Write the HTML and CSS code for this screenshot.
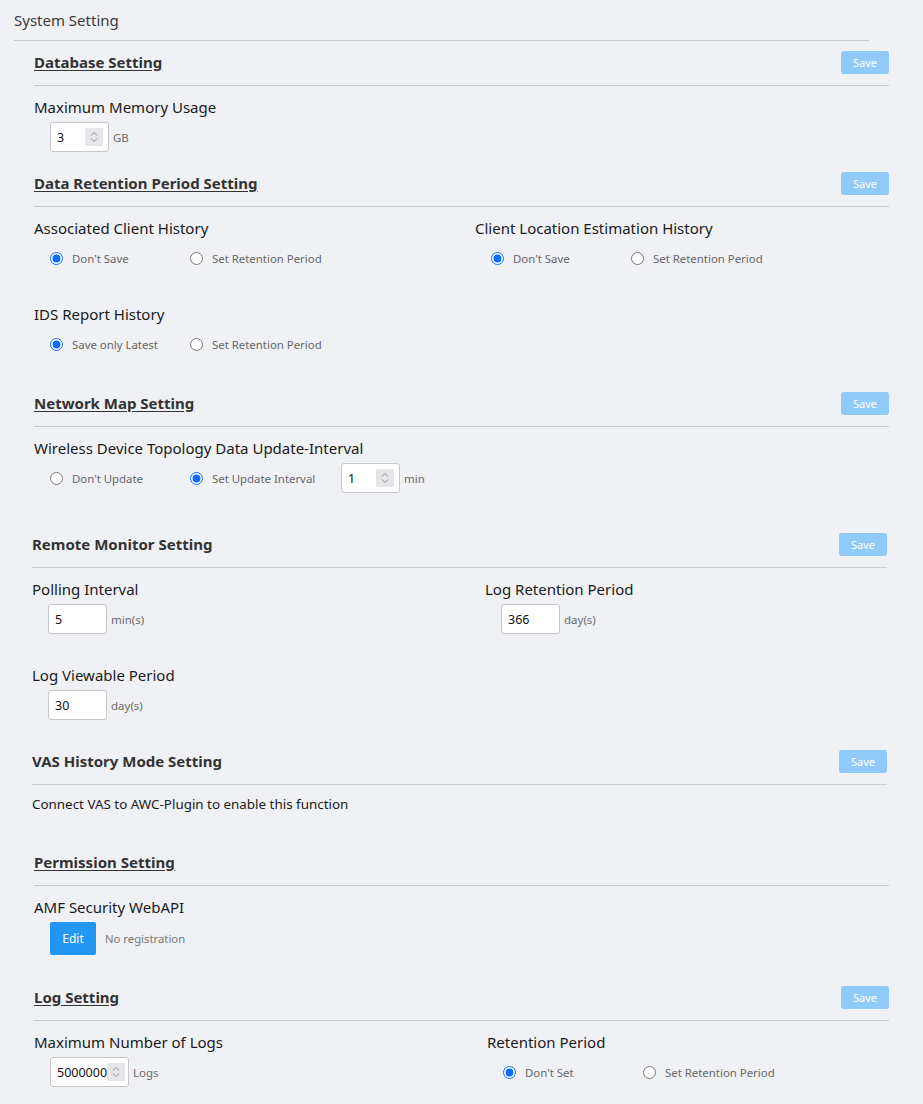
FILE: index.html
```html
<!DOCTYPE html>
<html lang="en">
<head>
<meta charset="utf-8">
<title>System Setting</title>
<link rel="stylesheet" href="styles.css">
</head>
<body>
<div class="page">
  <div class="page-title">System Setting</div>

  <!-- Database -->
  <section class="section pb10">
    <div class="sec-head">
      <h2 class="sec-title u">Database Setting</h2>
      <button class="btn-save">Save</button>
    </div>
    <div class="field">
      <div class="label">Maximum Memory Usage</div>
      <div class="row">
        <span class="num w59"><span class="val">3</span><span class="spin"><svg viewBox="0 0 18 18" width="18" height="18"><path d="M6 7.5 9 4.5 12 7.5M6 10.5 9 13.5 12 10.5" fill="none" stroke="#8a8a8a" stroke-width="1"/></svg></span></span>
        <span class="unit">GB</span>
      </div>
    </div>
  </section>

  <!-- Data Retention -->
  <section class="section pb23">
    <div class="sec-head">
      <h2 class="sec-title u">Data Retention Period Setting</h2>
      <button class="btn-save">Save</button>
    </div>
    <div class="grid g441">
      <div class="field">
        <div class="label">Associated Client History</div>
        <div class="row">
          <label class="opt"><input type="radio" name="ach" checked><span>Don't Save</span></label>
          <label class="opt"><input type="radio" name="ach"><span>Set Retention Period</span></label>
        </div>
      </div>
      <div class="field">
        <div class="label">Client Location Estimation History</div>
        <div class="row">
          <label class="opt"><input type="radio" name="cle" checked><span>Don't Save</span></label>
          <label class="opt"><input type="radio" name="cle"><span>Set Retention Period</span></label>
        </div>
      </div>
      <div class="field">
        <div class="label">IDS Report History</div>
        <div class="row">
          <label class="opt"><input type="radio" name="ids" checked><span>Save only Latest</span></label>
          <label class="opt"><input type="radio" name="ids"><span>Set Retention Period</span></label>
        </div>
      </div>
    </div>
  </section>

  <!-- Network Map -->
  <section class="section pb30">
    <div class="sec-head">
      <h2 class="sec-title u">Network Map Setting</h2>
      <button class="btn-save">Save</button>
    </div>
    <div class="field">
      <div class="label">Wireless Device Topology Data Update-Interval</div>
      <div class="row">
        <label class="opt"><input type="radio" name="nm"><span>Don't Update</span></label>
        <label class="opt wide"><input type="radio" name="nm" checked><span>Set Update Interval</span></label>
        <span class="num w59"><span class="val">1</span><span class="spin"><svg viewBox="0 0 18 18" width="18" height="18"><path d="M6 7.5 9 4.5 12 7.5M6 10.5 9 13.5 12 10.5" fill="none" stroke="#8a8a8a" stroke-width="1"/></svg></span></span>
        <span class="unit">min</span>
      </div>
    </div>
  </section>

  <!-- Remote Monitor -->
  <section class="section shift pb20">
    <div class="sec-head">
      <h2 class="sec-title">Remote Monitor Setting</h2>
      <button class="btn-save">Save</button>
    </div>
    <div class="grid g453">
      <div class="field">
        <div class="label">Polling Interval</div>
        <div class="row">
          <span class="num w59"><span class="val">5</span></span>
          <span class="unit">min(s)</span>
        </div>
      </div>
      <div class="field">
        <div class="label">Log Retention Period</div>
        <div class="row">
          <span class="num w59"><span class="val">366</span></span>
          <span class="unit">day(s)</span>
        </div>
      </div>
      <div class="field">
        <div class="label">Log Viewable Period</div>
        <div class="row">
          <span class="num w59"><span class="val">30</span></span>
          <span class="unit">day(s)</span>
        </div>
      </div>
    </div>
  </section>

  <!-- VAS -->
  <section class="section shift pb27">
    <div class="sec-head">
      <h2 class="sec-title">VAS History Mode Setting</h2>
      <button class="btn-save">Save</button>
    </div>
    <p class="note">Connect VAS to AWC-Plugin to enable this function</p>
  </section>

  <!-- Permission -->
  <section class="section pb21">
    <div class="sec-head">
      <h2 class="sec-title u">Permission Setting</h2>
    </div>
    <div class="field">
      <div class="label">AMF Security WebAPI</div>
      <div class="row tall">
        <button class="btn-edit">Edit</button>
        <span class="status">No registration</span>
      </div>
    </div>
  </section>

  <!-- Log -->
  <section class="section pb20">
    <div class="sec-head">
      <h2 class="sec-title u">Log Setting</h2>
      <button class="btn-save">Save</button>
    </div>
    <div class="grid g453">
      <div class="field">
        <div class="label">Maximum Number of Logs</div>
        <div class="row">
          <span class="num w79"><span class="val">5000000</span><span class="spin"><svg viewBox="0 0 18 18" width="18" height="18"><path d="M6 7.5 9 4.5 12 7.5M6 10.5 9 13.5 12 10.5" fill="none" stroke="#8a8a8a" stroke-width="1"/></svg></span></span>
          <span class="unit">Logs</span>
        </div>
      </div>
      <div class="field">
        <div class="label">Retention Period</div>
        <div class="row">
          <label class="opt"><input type="radio" name="rp" checked><span>Don't Set</span></label>
          <label class="opt"><input type="radio" name="rp"><span>Set Retention Period</span></label>
        </div>
      </div>
    </div>
  </section>
</div>
</body>
</html>
```

FILE: styles.css
```css
html, body {
  margin: 0;
  padding: 0;
  background: #f0f1f5;
}
body {
  font-family: "Noto Sans", "Open Sans", "Liberation Sans", sans-serif;
  color: #1a1a1a;
  width: 923px;
  height: 1104px;
  overflow: hidden;
}
.page {
  display: flex;
  flex-direction: column;
}
.page-title {
  margin: 0 54px 0 14px;
  height: 41px;
  box-sizing: border-box;
  padding-top: 8px;
  line-height: 24px;
  font-size: 15px;
  color: #3a3a3a;
  border-bottom: 1px solid #c9cacd;
}
.section {
  margin-left: 34px;
  width: 855px;
}
.section.shift {
  margin-left: 32px;
}
.pb10 { padding-bottom: 10px; }
.pb20 { padding-bottom: 20px; }
.pb21 { padding-bottom: 21px; }
.pb23 { padding-bottom: 23px; }
.pb27 { padding-bottom: 27px; }
.pb30 { padding-bottom: 30px; }

.sec-head {
  height: 45px;
  box-sizing: border-box;
  display: flex;
  align-items: center;
  justify-content: space-between;
  border-bottom: 1px solid #c9cacd;
  padding-bottom: 2px;
}
.sec-title {
  margin: 0;
  font-size: 15px;
  font-weight: 700;
  color: #333;
  line-height: 20px;
}
.sec-title.u {
  text-decoration: underline;
  text-underline-offset: 2px;
}
.btn-save {
  width: 48px;
  height: 23px;
  border: none;
  border-radius: 3px;
  background: #90caf9;
  color: #fff;
  font-family: inherit;
  font-size: 11px;
  padding: 0;
}
.grid {
  display: grid;
  row-gap: 20px;
}
.grid.g441 { grid-template-columns: 441px 1fr; }
.grid.g453 { grid-template-columns: 453px 1fr; }
.field {
  padding-top: 11px;
}
.label {
  font-size: 15px;
  line-height: 20px;
  color: #1a1a1a;
}
.row {
  margin-top: 5px;
  height: 30px;
  padding-left: 16px;
  display: flex;
  align-items: center;
}
.row.tall {
  height: 33px;
}
.opt {
  width: 140px;
  display: flex;
  align-items: center;
  font-size: 11.4px;
  color: #666;
}
.opt.wide {
  width: 151px;
}
.opt input {
  margin: 1px 9px 0 0;
  width: 13px;
  height: 13px;
  accent-color: #0a6cff;
}
.num {
  display: inline-flex;
  align-items: center;
  height: 30px;
  box-sizing: border-box;
  border: 1px solid #c6c7ca;
  border-radius: 3px;
  background: #fff;
  padding-left: 6px;
}
.num.w59 { width: 59px; }
.num.w79 { width: 79px; }
.num .val {
  flex: 1;
  font-size: 12.5px;
  color: #111;
}
.spin {
  width: 18px;
  height: 18px;
  margin-right: 5px;
  background: #e6e6ea;
  display: flex;
}
.unit {
  margin-left: 4px;
  font-size: 11.5px;
  color: #6a6a6a;
}
.note {
  margin: 0;
  padding-top: 9px;
  line-height: 20px;
  font-size: 13.4px;
  color: #1a1a1a;
}
.btn-edit {
  width: 46px;
  height: 33px;
  border: none;
  border-radius: 2px;
  background: #2196f3;
  color: #fff;
  font-family: inherit;
  font-size: 12px;
  padding: 0;
}
.status {
  margin-left: 9px;
  font-size: 11.3px;
  color: #777;
}
```
